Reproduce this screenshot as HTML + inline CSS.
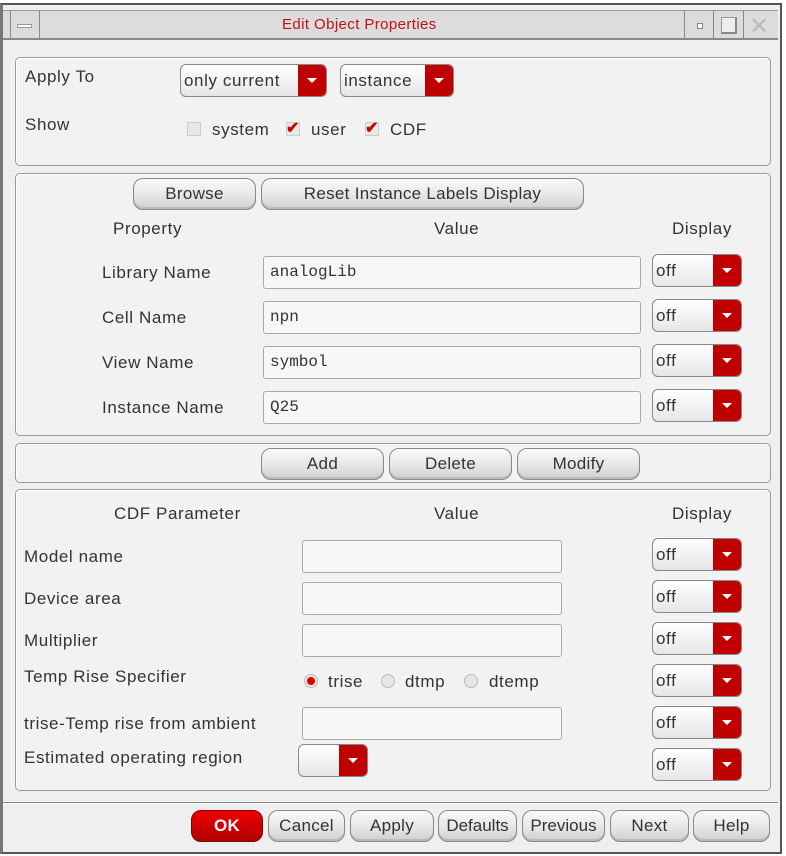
<!DOCTYPE html>
<html><head><meta charset="utf-8"><style>
*{box-sizing:border-box;margin:0;padding:0}
body{width:786px;height:856px;background:#fff;font-family:"Liberation Sans",sans-serif;font-size:17px;letter-spacing:0.6px;color:#333;position:relative;overflow:hidden}
.a{position:absolute}
.win{left:0;top:3px;width:782px;height:851px;background:#efefef;border:2px solid #555;border-left:3px solid #777}
.panel{position:absolute;left:15px;width:756px;border:1px solid #9a9a9a;border-radius:5px;background:#f2f2f2;box-shadow:inset 1px 1px 0 #fff}
.btn{position:absolute;height:32px;border:1px solid #888;border-radius:10px;background:linear-gradient(#fafafa,#e4e4e4 60%,#cfcfcf);text-align:center;line-height:30px;color:#333;box-shadow:inset 0 -2px 0 #bbb;letter-spacing:0.3px}
.dd{position:absolute;height:33px;border:1px solid #888;border-radius:6px;background:linear-gradient(#fff,#e6e6e6);overflow:hidden;line-height:31px;padding-left:3px;color:#333}
.dd .r{position:absolute;right:0;top:0;bottom:0;width:28px;background:#c00000}
.dd .r:after{content:"";position:absolute;left:9px;top:13px;border-left:5px solid transparent;border-right:5px solid transparent;border-top:5px solid #fff}
.in{position:absolute;height:33px;border:1px solid #aaa;border-radius:3px;background:#f7f7f7;font-family:"Liberation Mono",monospace;font-size:16px;letter-spacing:0;line-height:31px;padding-left:6px;color:#333}
.t{position:absolute;white-space:nowrap}
.cb{position:absolute;width:14px;height:14px;background:#e8e8e8;border:1px solid #ccc}
.ck{position:absolute;color:#c00;font-size:16px;font-weight:bold}
.rad{position:absolute;width:14px;height:14px;border-radius:50%;background:#e6e6e6;border:1px solid #bbb}
</style></head><body>
<div class="a win"></div>
<div class="a" style="left:3px;top:10px;width:775px;height:30px;background:#dcdcdc;border-bottom:2px solid #888;border-top:1px solid #999"></div>
<div class="a" style="left:10px;top:11px;width:30px;height:29px;border-right:1px solid #888;border-left:1px solid #888"></div>
<div class="a" style="left:17px;top:24px;width:15px;height:4px;background:#fff;border:1px solid #999"></div>
<div class="t" style="left:282px;top:16px;color:#c0101a;font-size:15px;letter-spacing:0.4px">Edit Object Properties</div>
<div class="a" style="left:684px;top:11px;width:90px;height:29px;border-left:1px solid #888"></div>
<div class="a" style="left:713px;top:11px;width:1px;height:29px;background:#888"></div>
<div class="a" style="left:743px;top:11px;width:1px;height:29px;background:#888"></div>
<div class="a" style="left:697px;top:23px;width:6px;height:6px;background:#fff;border:1px solid #888"></div>
<div class="a" style="left:721px;top:17px;width:16px;height:17px;border:1px solid #999;border-right:2px solid #888;border-bottom:2px solid #888;background:#eee"></div>
<div class="t" style="left:749px;top:12px;font-size:24px;color:#bbb">✕</div>

<div class="panel" style="top:57px;height:109px"></div>
<div class="t" style="left:25px;top:67px">Apply To</div>
<div class="dd" style="left:180px;top:64px;width:147px">only current<span class="r"></span></div>
<div class="dd" style="left:340px;top:64px;width:114px">instance<span class="r"></span></div>
<div class="t" style="left:25px;top:115px">Show</div>
<div class="cb" style="left:187px;top:122px"></div><div class="t" style="left:212px;top:120px">system</div>
<div class="cb" style="left:286px;top:122px"></div><div class="ck" style="left:286px;top:118px">✔</div><div class="t" style="left:311px;top:120px">user</div>
<div class="cb" style="left:365px;top:122px"></div><div class="ck" style="left:365px;top:118px">✔</div><div class="t" style="left:390px;top:120px">CDF</div>

<div class="panel" style="top:173px;height:263px"></div>
<div class="btn" style="left:133px;top:178px;width:123px">Browse</div>
<div class="btn" style="left:261px;top:178px;width:323px">Reset Instance Labels Display</div>
<div class="t" style="left:113px;top:219px">Property</div>
<div class="t" style="left:434px;top:219px">Value</div>
<div class="t" style="left:672px;top:219px">Display</div>

<div class="t" style="left:102px;top:263px">Library Name</div>
<div class="in" style="left:263px;top:256px;width:378px">analogLib</div>
<div class="dd" style="left:652px;top:254px;width:90px">off<span class="r"></span></div>
<div class="t" style="left:102px;top:308px">Cell Name</div>
<div class="in" style="left:263px;top:301px;width:378px">npn</div>
<div class="dd" style="left:652px;top:299px;width:90px">off<span class="r"></span></div>
<div class="t" style="left:102px;top:353px">View Name</div>
<div class="in" style="left:263px;top:346px;width:378px">symbol</div>
<div class="dd" style="left:652px;top:344px;width:90px">off<span class="r"></span></div>
<div class="t" style="left:102px;top:398px">Instance Name</div>
<div class="in" style="left:263px;top:391px;width:378px">Q25</div>
<div class="dd" style="left:652px;top:389px;width:90px">off<span class="r"></span></div>

<div class="panel" style="top:443px;height:40px"></div>
<div class="btn" style="left:261px;top:448px;width:123px">Add</div>
<div class="btn" style="left:389px;top:448px;width:123px">Delete</div>
<div class="btn" style="left:517px;top:448px;width:123px">Modify</div>

<div class="panel" style="top:489px;height:302px"></div>
<div class="t" style="left:114px;top:504px">CDF Parameter</div>
<div class="t" style="left:434px;top:504px">Value</div>
<div class="t" style="left:672px;top:504px">Display</div>

<div class="t" style="left:24px;top:547px">Model name</div>
<div class="in" style="left:302px;top:540px;width:260px"></div>
<div class="dd" style="left:652px;top:538px;width:90px">off<span class="r"></span></div>
<div class="t" style="left:24px;top:589px">Device area</div>
<div class="in" style="left:302px;top:582px;width:260px"></div>
<div class="dd" style="left:652px;top:580px;width:90px">off<span class="r"></span></div>
<div class="t" style="left:24px;top:631px">Multiplier</div>
<div class="in" style="left:302px;top:624px;width:260px"></div>
<div class="dd" style="left:652px;top:622px;width:90px">off<span class="r"></span></div>
<div class="t" style="left:24px;top:667px">Temp Rise Specifier</div>
<div class="rad" style="left:304px;top:674px"></div><div class="a" style="left:307px;top:677px;width:8px;height:8px;border-radius:50%;background:#d00"></div>
<div class="t" style="left:328px;top:672px">trise</div>
<div class="rad" style="left:381px;top:674px"></div><div class="t" style="left:405px;top:672px">dtmp</div>
<div class="rad" style="left:464px;top:674px"></div><div class="t" style="left:489px;top:672px">dtemp</div>
<div class="dd" style="left:652px;top:664px;width:90px">off<span class="r"></span></div>
<div class="t" style="left:24px;top:714px">trise-Temp rise from ambient</div>
<div class="in" style="left:302px;top:707px;width:260px"></div>
<div class="dd" style="left:652px;top:706px;width:90px">off<span class="r"></span></div>
<div class="t" style="left:24px;top:748px">Estimated operating region</div>
<div class="dd" style="left:298px;top:744px;width:70px"><span class="r"></span></div>
<div class="dd" style="left:652px;top:748px;width:90px">off<span class="r"></span></div>

<div class="a" style="left:3px;top:802px;width:775px;height:2px;background:#888;border-bottom:1px solid #fff"></div>
<div class="btn" style="left:191px;top:810px;width:72px;background:linear-gradient(#e00,#b00000);color:#fff;font-weight:bold;border-color:#800;box-shadow:none">OK</div>
<div class="btn" style="left:268px;top:810px;width:77px">Cancel</div>
<div class="btn" style="left:350px;top:810px;width:84px">Apply</div>
<div class="btn" style="left:438px;top:810px;width:79px;letter-spacing:0">Defaults</div>
<div class="btn" style="left:522px;top:810px;width:83px;letter-spacing:0">Previous</div>
<div class="btn" style="left:610px;top:810px;width:79px">Next</div>
<div class="btn" style="left:693px;top:810px;width:77px">Help</div>
</body></html>
